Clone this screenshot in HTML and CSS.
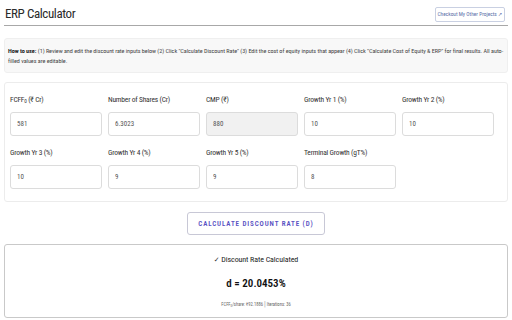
FILE: index.html
```html
<!DOCTYPE html>
<html lang="en">
<head>
  <meta charset="UTF-8">
  <meta name="viewport" content="width=device-width, initial-scale=1.0">
  <title>ERP Calculator</title>
  <link rel="stylesheet" href="styles.css">
</head>
<body>
  <div id="container">
    <div class="header">
      <h1>ERP Calculator</h1>
      <a class="projects-link" href="#">Checkout My Other Projects ↗</a>
    </div>

    <div class="instructions">
      <b>How to use:</b><span>(1) Review and edit the discount rate inputs below (2) Click "Calculate Discount Rate" (3) Edit the cost of equity inputs that appear (4) Click "Calculate Cost of Equity &amp; ERP" for final results. All auto-</span><br>
      <span>filled values are editable.</span>
    </div>

    <div class="card inputs">
      <div class="field">
        <label>FCFF<sub>0</sub> (₹ Cr)</label>
        <input type="text" value="581">
      </div>
      <div class="field">
        <label>Number of Shares (Cr)</label>
        <input type="text" value="6.3023">
      </div>
      <div class="field">
        <label>CMP (₹)</label>
        <input type="text" value="880" class="locked" readonly>
      </div>
      <div class="field">
        <label>Growth Yr 1 (%)</label>
        <input type="text" value="10">
      </div>
      <div class="field">
        <label>Growth Yr 2 (%)</label>
        <input type="text" value="10">
      </div>
      <div class="field">
        <label>Growth Yr 3 (%)</label>
        <input type="text" value="10">
      </div>
      <div class="field">
        <label>Growth Yr 4 (%)</label>
        <input type="text" value="9">
      </div>
      <div class="field">
        <label>Growth Yr 5 (%)</label>
        <input type="text" value="9">
      </div>
      <div class="field">
        <label>Terminal Growth (gT%)</label>
        <input type="text" value="8">
      </div>
    </div>

    <div class="actions">
      <button class="calc-btn">Calculate Discount Rate (d)</button>
    </div>

    <div class="result">
      <p class="result-title"><span class="check">✓</span> Discount Rate Calculated</p>
      <p class="result-value">d = 20.0453%</p>
      <p class="result-meta">FCFF<sub>0</sub>/share: ₹92.1886 <span class="sep">|</span> Iterations: 36</p>
    </div>
  </div>
</body>
</html>
```
FILE: styles.css
```css
body {
  font-family: 'Roboto', 'Noto Sans', sans-serif;
  font-stretch: 75%;
  background-color: #fff;
  color: #444;
  margin: 0;
}

#container {
  padding: 0 4px;
}

.header {
  display: flex;
  justify-content: space-between;
  align-items: center;
  height: 25px;
  border-bottom: 1px solid #a8a8a8;
  padding: 0 3px 0 1px;
}

h1 {
  margin: 0;
  font-size: 13px;
  font-weight: 400;
  letter-spacing: -0.4px;
  color: #2a2a2a;
  padding-top: 2px;
}

.projects-link {
  display: block;
  font-size: 5.4px;
  line-height: 7px;
  color: #5a6ea8;
  text-decoration: none;
  border: 1px solid #c9d0e2;
  border-radius: 2px;
  padding: 3px 2px;
  margin-top: 4px;
}

.instructions {
  margin-top: 12px;
  background: #f8f8f8;
  border: 1px solid #efefef;
  border-radius: 3px;
  padding: 7px 2px 6px 3px;
  font-size: 6.15px;
  letter-spacing: -0.05px;
  line-height: 10px;
  color: #444;
  white-space: nowrap;
}

.instructions b {
  color: #222;
  margin-right: 1.5px;
}

.card {
  margin-top: 9px;
  border: 1px solid #ececec;
  border-radius: 3px;
}

.inputs {
  display: grid;
  grid-template-columns: repeat(5, 92px);
  column-gap: 6px;
  row-gap: 12px;
  padding: 12px 6px 12px 5px;
}

.field label {
  display: block;
  font-size: 7.5px;
  letter-spacing: -0.2px;
  line-height: 10px;
  color: #333;
  margin-bottom: 6px;
}

sub {
  font-size: 70%;
  vertical-align: -1px;
  line-height: 0;
}

.field input {
  box-sizing: border-box;
  width: 100%;
  height: 24px;
  border: 1px solid #dcdcdc;
  border-radius: 3px;
  padding: 0 6px;
  font-family: inherit;
  font-stretch: 75%;
  font-size: 7px;
  color: #555;
  background: #fff;
}

.field input.locked {
  background: #f1f1f1;
}

.actions {
  display: flex;
  justify-content: center;
  padding: 10px 0 9px;
}

.calc-btn {
  width: 138px;
  height: 23px;
  background: #fff;
  border: 1px solid #c8c8d6;
  border-radius: 3px;
  font-family: inherit;
  font-stretch: 75%;
  font-size: 7px;
  font-weight: 600;
  letter-spacing: 0.9px;
  text-transform: uppercase;
  color: #5750c2;
  cursor: pointer;
}

.result {
  border: 1px solid #c9c9c9;
  border-radius: 3px;
  height: 74px;
  text-align: center;
  padding-top: 9px;
  box-sizing: border-box;
}

.result p {
  margin: 0;
}

.result-title {
  font-size: 8px;
  letter-spacing: -0.1px;
  line-height: 12px;
  color: #222;
}

.check {
  font-family: 'DejaVu Sans', sans-serif;
  font-stretch: normal;
  font-size: 7px;
  color: #333;
}

.result-value {
  font-size: 11px;
  line-height: 16px;
  font-weight: 600;
  color: #111;
  margin-top: 10px !important;
}

.result-meta {
  font-size: 4.6px;
  line-height: 8px;
  color: #666;
  margin-top: 8px !important;
}

.sep {
  color: #999;
  font-size: 7px;
}
```
